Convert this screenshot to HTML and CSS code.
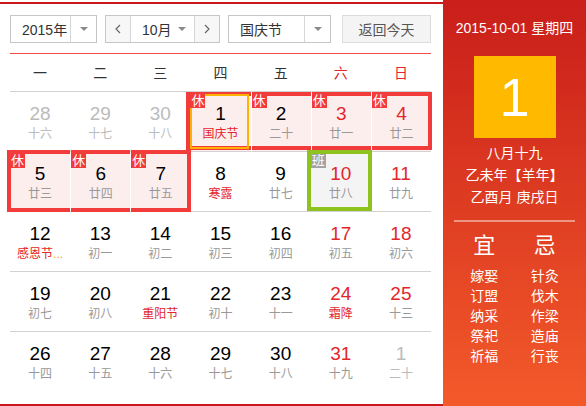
FILE: index.html
```html
<!DOCTYPE html>
<html lang="zh">
<head>
<meta charset="utf-8">
<link rel="stylesheet" href="styles.css">
</head>
<body>
<div class="cal">
  <div class="main">
    <div class="toolbar">
      <div class="sel year">
        <span class="val">2015年</span>
        <span class="drop"><i class="tri"></i></span>
      </div>
      <div class="sel month">
        <span class="nav prev"><svg width="6" height="10" viewBox="0 0 6 10"><polyline points="5,1 1,5 5,9" fill="none" stroke="#666" stroke-width="1.2"/></svg></span>
        <span class="val">10月</span>
        <span class="mdrop"><i class="tri"></i></span>
        <span class="nav next"><svg width="6" height="10" viewBox="0 0 6 10"><polyline points="1,1 5,5 1,9" fill="none" stroke="#666" stroke-width="1.2"/></svg></span>
      </div>
      <div class="sel holiday">
        <span class="val">国庆节</span>
        <span class="drop"><i class="tri"></i></span>
      </div>
      <div class="today">返回今天</div>
    </div>
    <div class="weeks">
      <span>一</span><span>二</span><span>三</span><span>四</span><span>五</span><span class="we">六</span><span class="we">日</span>
    </div>
    <div class="days">
      <div class="d other"><span class="n">28</span><span class="l">十六</span></div>
      <div class="d other"><span class="n">29</span><span class="l">十七</span></div>
      <div class="d other"><span class="n">30</span><span class="l">十八</span></div>
      <div class="d rest r1 first sel-day"><i class="tag">休</i><span class="n">1</span><span class="l fest">国庆节</span></div>
      <div class="d rest r1"><i class="tag">休</i><span class="n">2</span><span class="l">二十</span></div>
      <div class="d rest r1 red"><i class="tag">休</i><span class="n">3</span><span class="l">廿一</span></div>
      <div class="d rest r1 last red"><i class="tag">休</i><span class="n">4</span><span class="l">廿二</span></div>

      <div class="d rest r2 first"><i class="tag">休</i><span class="n">5</span><span class="l">廿三</span></div>
      <div class="d rest r2"><i class="tag">休</i><span class="n">6</span><span class="l">廿四</span></div>
      <div class="d rest r2 last"><i class="tag">休</i><span class="n">7</span><span class="l">廿五</span></div>
      <div class="d"><span class="n">8</span><span class="l fest">寒露</span></div>
      <div class="d"><span class="n">9</span><span class="l">廿七</span></div>
      <div class="d work red"><i class="tag gray">班</i><span class="n">10</span><span class="l">廿八</span></div>
      <div class="d red"><span class="n">11</span><span class="l">廿九</span></div>

      <div class="d"><span class="n">12</span><span class="l fest">感恩节<b class="more">...</b></span></div>
      <div class="d"><span class="n">13</span><span class="l">初一</span></div>
      <div class="d"><span class="n">14</span><span class="l">初二</span></div>
      <div class="d"><span class="n">15</span><span class="l">初三</span></div>
      <div class="d"><span class="n">16</span><span class="l">初四</span></div>
      <div class="d red"><span class="n">17</span><span class="l">初五</span></div>
      <div class="d red"><span class="n">18</span><span class="l">初六</span></div>

      <div class="d"><span class="n">19</span><span class="l">初七</span></div>
      <div class="d"><span class="n">20</span><span class="l">初八</span></div>
      <div class="d"><span class="n">21</span><span class="l fest">重阳节</span></div>
      <div class="d"><span class="n">22</span><span class="l">初十</span></div>
      <div class="d"><span class="n">23</span><span class="l">十一</span></div>
      <div class="d red"><span class="n">24</span><span class="l fest">霜降</span></div>
      <div class="d red"><span class="n">25</span><span class="l">十三</span></div>

      <div class="d"><span class="n">26</span><span class="l">十四</span></div>
      <div class="d"><span class="n">27</span><span class="l">十五</span></div>
      <div class="d"><span class="n">28</span><span class="l">十六</span></div>
      <div class="d"><span class="n">29</span><span class="l">十七</span></div>
      <div class="d"><span class="n">30</span><span class="l">十八</span></div>
      <div class="d red"><span class="n">31</span><span class="l">十九</span></div>
      <div class="d other"><span class="n">1</span><span class="l">二十</span></div>
    </div>
  </div>
  <div class="side">
    <div class="date">2015-10-01 星期四</div>
    <div class="big">1</div>
    <div class="lunar">
      <div>八月十九</div>
      <div>乙未年【羊年】</div>
      <div>乙酉月 庚戌日</div>
    </div>
    <div class="sep"></div>
    <div class="yj">
      <div class="col">
        <div class="h">宜</div>
        <ul><li>嫁娶</li><li>订盟</li><li>纳采</li><li>祭祀</li><li>祈福</li></ul>
      </div>
      <div class="col">
        <div class="h">忌</div>
        <ul><li>针灸</li><li>伐木</li><li>作梁</li><li>造庙</li><li>行丧</li></ul>
      </div>
    </div>
  </div>
</div>
</body>
</html>
```

FILE: styles.css
```css
body {
  margin: 0;
  font-family: "Liberation Sans", "Noto Sans CJK SC", sans-serif;
  background: #fff;
}

.cal {
  display: flex;
  align-items: flex-start;
  width: 586px;
  height: 406px;
}

.main {
  width: 443px;
  height: 404px;
  margin-top: 2px;
  box-sizing: border-box;
  border-top: 2px solid #c9171c;
  border-bottom: 2px solid #c9171c;
  padding: 11px 12px 0 10px;
}

/* toolbar */
.toolbar {
  display: flex;
  height: 28px;
  padding-bottom: 10px;
  border-bottom: 1px solid #f34a4a;
}

.sel {
  display: flex;
  box-sizing: border-box;
  height: 28px;
  border: 1px solid #c6c6c6;
  font-size: 14px;
  color: #333;
  margin-right: 8px;
}

.sel .val {
  flex: 1;
  min-width: 0;
  display: flex;
  align-items: center;
  padding-left: 11px;
  white-space: nowrap;
}

.sel .drop {
  width: 25px;
  border-left: 1px solid #d6d6d6;
  display: flex;
  align-items: center;
  justify-content: center;
}

.tri {
  width: 0;
  height: 0;
  border-left: 4px solid transparent;
  border-right: 4px solid transparent;
  border-top: 4px solid #8a8a8a;
}

.year { width: 87px; }
.month { width: 115px; }
.holiday { width: 103px; margin-right: 11px; }

.month .val { padding-left: 11px; }

.nav {
  width: 24px;
  flex-shrink: 0;
  display: flex;
  align-items: center;
  justify-content: center;
  background: #f7f7f7;
}
.nav.prev { border-right: 1px solid #d6d6d6; }
.nav.next { border-left: 1px solid #d6d6d6; }

.mdrop {
  width: 16px;
  flex-shrink: 0;
  display: flex;
  align-items: center;
  justify-content: flex-start;
}

.today {
  width: 89px;
  height: 28px;
  box-sizing: border-box;
  border: 1px solid #dcdcdc;
  background: #f4f4f4;
  color: #555;
  font-size: 14px;
  display: flex;
  align-items: center;
  justify-content: center;
}

/* weekday header */
.weeks {
  display: grid;
  grid-template-columns: repeat(7, 1fr);
  height: 38px;
  box-sizing: border-box;
  padding-bottom: 2px;
  border-bottom: 1px solid #d2d2d2;
  align-items: center;
  text-align: center;
  font-size: 14px;
  color: #333;
}
.weeks .we { color: #e3262b; }

/* days */
.days {
  display: grid;
  grid-template-columns: repeat(7, 1fr);
  grid-auto-rows: 60px;
}

.d {
  position: relative;
  box-sizing: border-box;
  border-bottom: 1px solid #d2d2d2;
  text-align: center;
  padding-top: 11px;
}
.d:nth-child(n+29) { border-bottom: none; }

.d .n {
  display: block;
  font-size: 19px;
  line-height: 22px;
  color: #000;
}
.d .l {
  display: block;
  margin-top: 1px;
  font-size: 12px;
  line-height: 16px;
  color: #999;
}

.d.red .n { color: #e3262b; }
.d .l.fest { color: #e3262b; }
.d .more { font-weight: normal; color: #f5a623; }

.d.other .n { color: #bbb; }
.d.other .l { color: #bbb; }

/* rest days group */
.rest {
  background: #fdeeee;
  border-left: 1px solid #fff;
}
.rest.first { border-left: none; }

.rest::before {
  content: "";
  position: absolute;
  left: 0;
  right: 0;
  border-top: 4px solid #f23b3b;
  border-bottom: 4px solid #f23b3b;
  pointer-events: none;
  z-index: 1;
}
.r1::before { top: 0; bottom: 1px; }
.r2::before { top: -2px; bottom: -1px; }
.rest.first::before { border-left: 4px solid #f23b3b; }
.r1.first::before { left: -4px; }
.r2.first::before { left: -3px; }
.rest.last::before { border-right: 4px solid #f23b3b; right: -1px; }

.sel-day::after {
  content: "";
  position: absolute;
  top: 2px;
  bottom: 2px;
  left: 0;
  right: 2px;
  border: 2px solid #fcb400;
  z-index: 1;
}

.work { background: #f4f4f4; }
.work::after {
  content: "";
  position: absolute;
  top: -2px;
  bottom: 0;
  left: -4px;
  right: -1px;
  border: 4px solid #8dc21f;
  z-index: 1;
}

.tag {
  position: absolute;
  top: 2px;
  left: 0;
  width: 15px;
  height: 14px;
  background: #f23b3b;
  color: #fff;
  font-style: normal;
  font-size: 13px;
  line-height: 14px;
  text-align: center;
  z-index: 2;
}
.tag.gray { background: #a3a3a3; }

/* side panel */
.side {
  width: 143px;
  height: 406px;
  box-sizing: border-box;
  padding-top: 19px;
  background: linear-gradient(#c91e1a, #f35a2a);
  color: #fff;
  text-align: center;
}

.date {
  font-size: 14px;
  line-height: 18px;
}

.big {
  width: 82px;
  height: 82px;
  margin: 19px auto 0;
  background: #ffba00;
  font-size: 54px;
  display: flex;
  align-items: center;
  justify-content: center;
}

.lunar {
  margin-top: 4px;
  font-size: 14px;
  line-height: 22px;
}

.sep {
  height: 2px;
  margin: 12px 11px 0;
  background: rgba(255, 255, 255, 0.45);
}

.yj {
  display: grid;
  grid-template-columns: 1fr 1fr;
  margin: 9px 11px 0;
}

.yj .h {
  font-size: 22px;
  line-height: 30px;
}

.yj ul {
  list-style: none;
  margin: 5px 0 0;
  padding: 0;
  font-size: 14px;
  line-height: 20px;
}
```
